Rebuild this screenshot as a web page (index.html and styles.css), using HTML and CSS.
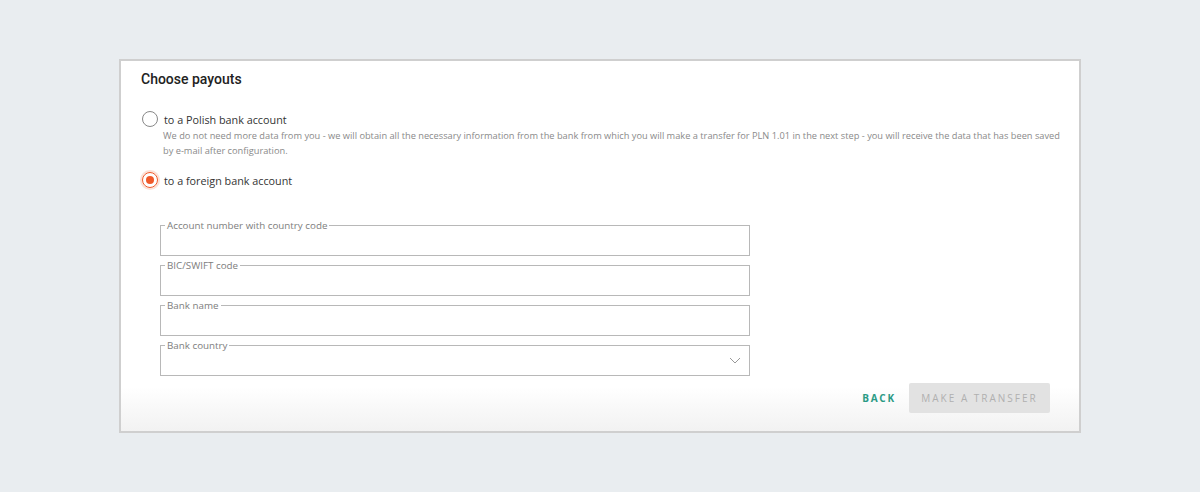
FILE: index.html
```html
<!DOCTYPE html>
<html lang="en">

<head>
    <meta charset="UTF-8">
    <meta name="viewport" content="width=device-width, initial-scale=1.0">
    <title>Choose payouts</title>
    <link rel="stylesheet" href="styles.css">
</head>

<body>

<section class="page">
    <div class="payout-box">
        <h2>Choose payouts</h2>

        <label class="radio-row">
            <span class="radio"></span>
            <span>to a Polish bank account</span>
        </label>
        <p class="hint">We do not need more data from you - we will obtain all the necessary information from the bank from which you will make a transfer for PLN 1.01 in the next step - you will receive the data that has been saved by e-mail after configuration.</p>

        <label class="radio-row second">
            <span class="radio checked"></span>
            <span>to a foreign bank account</span>
        </label>

        <!-- Foreign account form -->
        <div class="fields">
            <div class="field">
                <span class="field-label">Account number with country code</span>
            </div>
            <div class="field">
                <span class="field-label">BIC/SWIFT code</span>
            </div>
            <div class="field">
                <span class="field-label">Bank name</span>
            </div>
            <div class="field select">
                <span class="field-label">Bank country</span>
                <svg class="chevron" width="12" height="7" viewBox="0 0 12 7">
                    <path d="M1 1l5 5 5-5" fill="none" stroke="#999" stroke-width="1"/>
                </svg>
            </div>
        </div>

        <div class="actions">
            <a href="#" class="back-btn">BACK</a>
            <button class="btn" disabled>MAKE A TRANSFER</button>
        </div>
    </div>
</section>

</body>

</html>
```

FILE: styles.css
```css
* {
    margin: 0;
    padding: 0;
    box-sizing: border-box;
}

body {
    font-family: 'Open Sans', sans-serif;
    background-color: #e9edf0;
}

.page {
    padding: 59px 119px;
}

.payout-box {
    background: linear-gradient(to bottom, #fff 88%, #f2f2f2 100%);
    border: 2px solid #cfcfcf;
    padding: 8px 14px 18px 20px;
}

.payout-box h2 {
    font-family: 'Roboto', sans-serif;
    font-weight: 500;
    font-size: 14px;
    line-height: 20px;
    color: #222;
    margin-bottom: 21px;
}

.radio-row {
    display: flex;
    align-items: center;
    height: 18px;
    font-size: 10.8px;
    color: #333;
}

.radio-row.second {
    margin-top: 13px;
}

.radio {
    width: 16px;
    height: 16px;
    border: 1px solid #888;
    border-radius: 50%;
    margin: 0 6px 0 1px;
    display: flex;
    align-items: center;
    justify-content: center;
}

.radio.checked {
    border: 1.5px solid #f0592a;
    box-shadow: 0 0 0 2px #fde1d6;
}

.radio.checked::after {
    content: "";
    width: 8px;
    height: 8px;
    border-radius: 50%;
    background-color: #f0592a;
}

.hint {
    margin-left: 22px;
    font-size: 9.25px;
    line-height: 15px;
    color: #8a8a8a;
}

.fields {
    margin: 36px 0 0 19px;
    width: 590px;
}

.field {
    position: relative;
    height: 31px;
    border: 1px solid #b8b8b8;
    margin-bottom: 9px;
}

.field:last-child {
    margin-bottom: 0;
}

.field-label {
    position: absolute;
    top: -6px;
    left: 4px;
    padding: 0 2px;
    background-color: #fff;
    font-size: 9.8px;
    line-height: 11px;
    color: #7d7d7d;
}

.field .chevron {
    position: absolute;
    right: 8px;
    top: 11px;
}

.actions {
    display: flex;
    justify-content: flex-end;
    align-items: center;
    margin-top: 7px;
    padding-right: 15px;
}

.back-btn {
    color: #2b9a85;
    font-weight: 700;
    font-size: 10px;
    letter-spacing: 1.8px;
    text-decoration: none;
    margin-right: 13px;
}

.btn {
    width: 141px;
    height: 30px;
    border: none;
    border-radius: 2px;
    background-color: #e2e2e2;
    color: #b0b0b0;
    font-family: 'Open Sans', sans-serif;
    font-size: 10px;
    letter-spacing: 2px;
}
```
